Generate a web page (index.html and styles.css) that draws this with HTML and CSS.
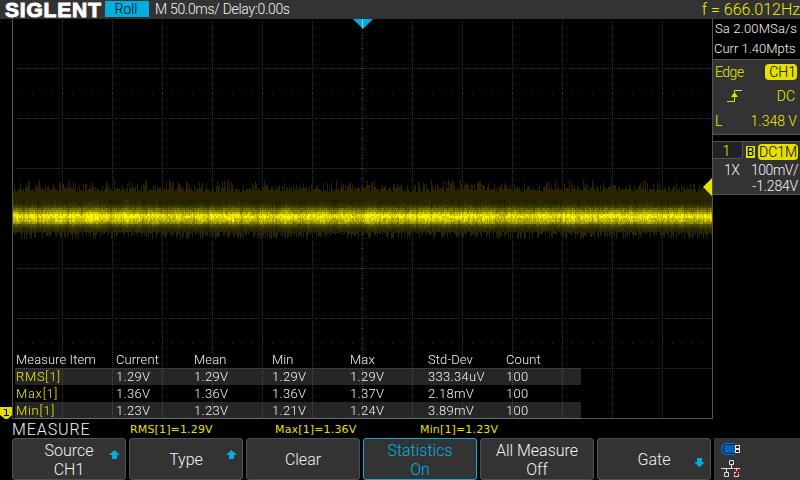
FILE: index.html
```html
<!DOCTYPE html>
<html lang="en">
<head>
    <meta charset="UTF-8">
    <title>SIGLENT Oscilloscope</title>
    <link rel="stylesheet" href="styles.css">
</head>
<body>
    <div class="scope">
        <header class="topbar">
            <span class="logo">SIGLENT</span>
            <span class="mode">Roll</span>
            <span class="timebase">M 50.0ms/ Delay:0.00s</span>
            <span class="freq">f = 666.012Hz</span>
        </header>

        <main class="middle">
            <div class="gutter">
                <svg class="ch-marker" width="12" height="12" viewBox="0 0 12 12">
                    <path d="M0 0H12V8L8 12H5L0 8Z" fill="#e2dc00"/>
                    <path d="M4 2.500H6.500V8M4 8.500H9" stroke="#000" fill="none"/>
                </svg>
            </div>
            <div class="plot">
                <canvas id="screen" width="701" height="401"></canvas>
                <svg class="trig-pos" width="20" height="10" viewBox="0 0 20 10">
                    <path d="M0 0H20L10 10Z" fill="#00aee0"/>
                    <path d="M9.500 0V9" stroke="#7fdcf4"/>
                </svg>
                <svg class="trig-level" width="9" height="18" viewBox="0 0 9 18">
                    <path d="M9 0V18L0 9Z" fill="#e6e000"/>
                </svg>
                <table class="stats">
                    <thead>
                        <tr><th>Measure Item</th><th>Current</th><th>Mean</th><th>Min</th><th>Max</th><th>Std-Dev</th><th>Count</th></tr>
                    </thead>
                    <tbody>
                        <tr class="shade"><td class="item">RMS[1]</td><td>1.29V</td><td>1.29V</td><td>1.29V</td><td>1.29V</td><td>333.34uV</td><td>100</td></tr>
                        <tr><td class="item">Max[1]</td><td>1.36V</td><td>1.36V</td><td>1.36V</td><td>1.37V</td><td>2.18mV</td><td>100</td></tr>
                        <tr class="shade"><td class="item">Min[1]</td><td>1.23V</td><td>1.23V</td><td>1.21V</td><td>1.24V</td><td>3.89mV</td><td>100</td></tr>
                    </tbody>
                </table>
            </div>
            <aside class="side">
                <div class="acq">
                    <div class="sa">Sa 2.00MSa/s</div>
                    <div class="curr">Curr 1.40Mpts</div>
                </div>
                <div class="trigger">
                    <div class="line"><span class="edge">Edge</span><span class="pill">CH1</span></div>
                    <div class="line">
                        <svg class="slope" width="17" height="14" viewBox="0 0 17 14">
                            <path d="M1 12.500H8.500V1.500H16" stroke="#e2dc00" fill="none"/>
                            <path d="M8.500 3L12 8H5Z" fill="#e2dc00"/>
                        </svg>
                        <span class="trig-coupling">DC</span>
                    </div>
                    <div class="line"><span>L</span><span class="level">1.348 V</span></div>
                </div>
                <div class="channel">
                    <div class="ch-head">
                        <span class="tab">1</span>
                        <span class="bw">B</span>
                        <span class="pill coupling">DC1M</span>
                    </div>
                    <div class="ch-row"><span class="probe">1X</span><span class="scale">100mV/</span></div>
                    <div class="ch-row"><span class="offset">-1.284V</span></div>
                </div>
            </aside>
        </main>

        <div class="readout">
            <span class="menu-name">MEASURE</span>
            <span class="value">RMS[1]=1.29V</span>
            <span class="value">Max[1]=1.36V</span>
            <span class="value">Min[1]=1.23V</span>
        </div>

        <footer class="softkeys">
            <div class="key"><span>Source<br>CH1</span>
                <svg class="arrow" width="11" height="9" viewBox="0 0 11 9"><path d="M5.500 0L11 5H8V9H3V5H0Z" fill="#00aee0"/></svg>
            </div>
            <div class="key"><span>Type</span>
                <svg class="arrow" width="11" height="9" viewBox="0 0 11 9"><path d="M5.500 0L11 5H8V9H3V5H0Z" fill="#00aee0"/></svg>
            </div>
            <div class="key"><span>Clear</span></div>
            <div class="key active"><span>Statistics<br>On</span></div>
            <div class="key"><span>All Measure<br>Off</span></div>
            <div class="key"><span>Gate</span>
                <svg class="arrow down" width="11" height="9" viewBox="0 0 11 9"><path d="M5.500 9L11 4H8V0H3V4H0Z" fill="#00aee0"/></svg>
            </div>
            <div class="status">
                <svg width="20" height="12" viewBox="0 0 20 12">
                    <path d="M14 .5H4L1 3V9L4 11.500H14" fill="#005ba8" stroke="#0a6cff"/>
                    <path d="M14 1.500H4.500L2.500 3.500V8.500L4.500 10.500H14" fill="#0065b0" stroke="#001c38"/>
                    <path d="M14 2H19V10H14Z" fill="#e4e4e4"/>
                    <path d="M15 3H18V5H15ZM15 7H18V9H15Z" fill="#222"/>
                </svg>
                <svg width="22" height="18" viewBox="0 0 22 18">
                    <path d="M8.500 .5H12.500V4.500H8.500ZM10.500 5V8.500M0 8.500H20M5.500 8.500V12M15.500 8.500V12M3.500 12.500H7.500V16.500H3.500ZM13.500 12.500H17.500V16.500H13.500Z" stroke="#e0e0e0" fill="none"/>
                    <path d="M12 8L21 17M20 8L11 17" stroke="#e00000"/>
                </svg>
            </div>
        </footer>
    </div>
    <script src="scope.js"></script>
</body>
</html>
```

FILE: styles.css
```css
body {
    margin: 0;
    background-color: #000;
    color: #f4f4f4;
    font-family: Roboto, "Liberation Sans", sans-serif;
    font-weight: 300;
    font-size: 13px;
}
.scope {
    width: 800px;
    height: 480px;
    display: flex;
    flex-direction: column;
    overflow: hidden;
    white-space: nowrap;
}
.topbar {
    height: 19px;
    display: flex;
    align-items: flex-start;
    background-color: #333;
    line-height: 19px;
    font-size: 14px;
}
.logo {
    width: 100px;
    padding-left: 5px;
    color: #fff;
    font-family: "Liberation Sans", Arial, sans-serif;
    font-size: 21px;
    font-weight: bold;
    letter-spacing: 0.8px;
    -webkit-text-stroke: 1px #fff;
}
.mode {
    width: 44px;
    height: 16px;
    margin-top: 1px;
    line-height: 17px;
    text-align: center;
    text-indent: -2px;
    background-color: #00aee0;
    color: #000;
}
.timebase {
    margin-left: 6px;
    letter-spacing: -0.3px;
}
.freq {
    margin-left: auto;
    color: #f0ea00;
    font-size: 16px;
}
.middle {
    height: 400px;
    display: flex;
}
.gutter {
    width: 12px;
    display: flex;
    align-items: flex-end;
}
.plot {
    position: relative;
    width: 701px;
    height: 400px;
}
#screen {
    display: block;
    margin-top: -1px;
}
.trig-pos {
    position: absolute;
    left: 341px;
    top: 0;
}
.trig-level {
    position: absolute;
    right: 1px;
    top: 159px;
}
.stats {
    position: absolute;
    left: 3px;
    top: 332px;
    width: 566px;
    table-layout: fixed;
    border-collapse: collapse;
    line-height: 17px;
}
.stats th, .stats td {
    padding: 0 0 0 1px;
    height: 17px;
    width: 77px;
    text-align: left;
    font-weight: 300;
    letter-spacing: 0.1px;
}
.stats th:first-child {
    width: 99px;
}
.stats th:last-child {
    width: 75px;
}
.stats td {
    letter-spacing: 0.3px;
}
.stats .shade {
    background-color: rgba(255, 255, 255, 0.15);
}
.stats .item {
    color: #f0ea00;
    letter-spacing: 0.7px;
}
.side {
    width: 87px;
}
.acq {
    height: 40px;
    padding-left: 2px;
    line-height: 20px;
    border-bottom: 1px solid #555;
}
.sa {
    letter-spacing: 0.15px;
}
.curr {
    margin-left: -1px;
}
.trigger {
    height: 75px;
    box-sizing: border-box;
    padding: 0 3px 0 2px;
    background-color: #333;
    border-bottom: 1px solid #555;
    color: #f0ea00;
    font-size: 14px;
}
.line {
    height: 25px;
    display: flex;
    align-items: center;
    justify-content: space-between;
}
.line:first-child {
    height: 23px;
}
.edge {
    letter-spacing: -0.5px;
}
.pill {
    padding: 0 1px 0 4px;
    height: 16px;
    line-height: 17px;
    border-radius: 4px;
    background-color: #e6e000;
    color: #000;
}
.slope {
    margin-left: 11px;
}
.trig-coupling {
    margin-right: 2px;
}
.channel {
    height: 54px;
    box-sizing: border-box;
    margin-top: 6px;
    background-color: #333;
    border: 1px solid #555;
    border-width: 1px 0;
    font-size: 14px;
}
.ch-head {
    height: 19px;
    display: flex;
    align-items: center;
}
.tab {
    width: 30px;
    height: 17px;
    box-sizing: border-box;
    padding-right: 2px;
    border-right: 1px solid #555;
    border-bottom: 1px solid #555;
    border-radius: 0 0 4px 0;
    background-color: #222;
    color: #f0ea00;
    text-align: center;
    line-height: 19px;
    align-self: flex-start;
}
.bw {
    width: 9px;
    height: 12px;
    margin-left: 3px;
    background-color: #e6e000;
    color: #000;
    font-size: 12px;
    font-weight: 400;
    line-height: 12px;
    text-align: center;
}
.coupling {
    margin-left: 3px;
    padding: 0 1px;
    width: 38px;
    text-align: center;
}
.ch-row {
    display: flex;
    height: 16px;
    line-height: 18px;
    padding: 0 2px 0 11px;
    letter-spacing: -0.5px;
}
.ch-row .offset {
    letter-spacing: -0.2px;
}
.scale, .offset {
    margin-left: auto;
}
.readout {
    height: 19px;
    display: flex;
    padding-left: 12px;
    line-height: 21px;
}
.menu-name {
    width: 118px;
    font-size: 16px;
    letter-spacing: 0.9px;
}
.value {
    width: 145px;
    color: #e6e000;
    font-family: "DejaVu Sans", sans-serif;
    font-size: 11px;
    font-weight: 400;
    letter-spacing: 0.15px;
}
.softkeys {
    height: 42px;
    display: flex;
    gap: 3px;
    padding-left: 12px;
}
.key {
    position: relative;
    width: 114px;
    height: 42px;
    box-sizing: border-box;
    border: 1px solid #505050;
    border-radius: 3px;
    background-color: #333;
    display: flex;
    align-items: center;
    justify-content: center;
    text-align: center;
    font-size: 16px;
    line-height: 19px;
}
.key span {
    padding-top: 1px;
}
.key.active {
    border-color: #00aee0;
    color: #00b4ea;
}
.arrow {
    position: absolute;
    right: 5px;
    top: 11px;
}
.arrow.down {
    top: 19px;
}
.status {
    flex: 1;
    background-color: #333;
    padding: 5px 0 0 7px;
    display: flex;
    flex-direction: column;
    gap: 5px;
}
```

FILE: scope.js
```js
const canvas = document.getElementById('screen');
const ctx = canvas.getContext('2d');

let seed = 7;
function rnd() {
    seed = (seed * 16807) % 2147483647;
    return seed / 2147483647;
}

// graticule, 50px per division
ctx.fillStyle = '#303030';
for (let x = 50; x < 700; x += 50) {
    for (let y = 0; y < 400; y += 2) ctx.fillRect(x, y, 1, 1);
}
for (let y = 50; y < 400; y += 50) {
    for (let x = 0; x < 700; x += 2) ctx.fillRect(x, y, 1, 1);
}
for (let y = 10; y < 400; y += 10) ctx.fillRect(349, y, 3, 1);
for (let x = 10; x < 700; x += 10) {
    ctx.fillRect(x, 75, 1, 1);
    ctx.fillRect(x, 325, 1, 1);
}

// trace: dim noise envelope with a bright core
const core = [38, 42, 50, 70, 105, 135, 175, 238, 245, 205, 190, 150, 90, 65, 48, 40];
let drift = 0;
for (let x = 1; x < 700; x++) {
    const top = 171 - Math.floor(Math.pow(rnd(), 2) * 10) + Math.floor(rnd() * 4);
    const bottom = 214 + Math.floor(Math.pow(rnd(), 1.6) * 8);
    ctx.fillStyle = '#2a2500';
    ctx.fillRect(x, top, 1, bottom - top);
    drift = drift * 0.7 + (rnd() - 0.5) * 0.16;
    const gain = 0.97 + drift + (rnd() - 0.5) * 0.14;
    for (let i = 0; i < core.length; i++) {
        const v = Math.round(Math.min(255, core[i] * gain * (0.82 + rnd() * 0.36)));
        ctx.fillStyle = `rgb(${v}, ${Math.round(v * 0.97)}, 0)`;
        ctx.fillRect(x, 182 + i * 2, 1, 2);
    }
}

// frame
ctx.fillStyle = '#555';
ctx.fillRect(0, 0, 1, 401);
ctx.fillRect(700, 0, 1, 401);
ctx.fillRect(0, 400, 701, 1);
```
